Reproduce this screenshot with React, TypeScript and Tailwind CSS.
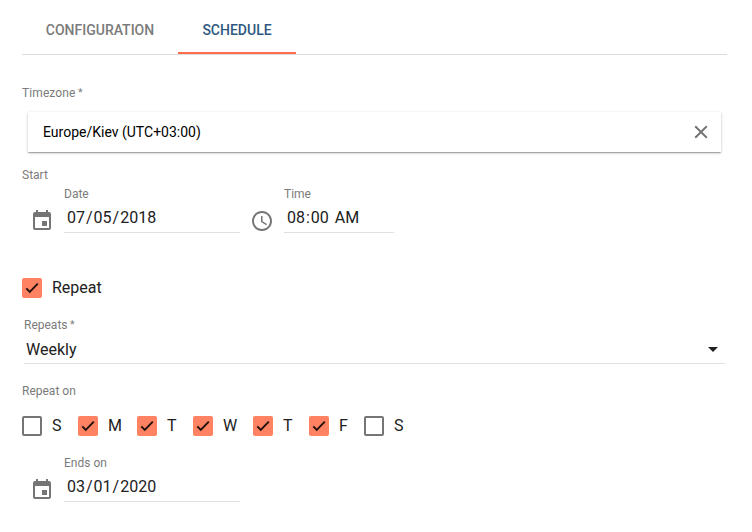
import type { ReactNode } from "react";

const days = [
  { label: "S", on: false, width: "w-[56px]" },
  { label: "M", on: true, width: "w-[59px]" },
  { label: "T", on: true, width: "w-[56px]" },
  { label: "W", on: true, width: "w-[60px]" },
  { label: "T", on: true, width: "w-[56px]" },
  { label: "F", on: true, width: "w-[55px]" },
  { label: "S", on: false, width: "w-[56px]" },
];

function Checkbox({ on }: { on: boolean }) {
  if (!on) {
    return <span className="size-5 shrink-0 rounded-[2px] border-2 border-[#757575]" />;
  }
  return (
    <span className="flex size-5 shrink-0 items-center justify-center rounded-[2px] bg-[#ff8262]">
      <svg viewBox="0 0 20 20" className="size-5" fill="none" stroke="#21110d" strokeWidth="1.9">
        <path d="M4.3 10.3l3.5 3.6L15.8 5.7" />
      </svg>
    </span>
  );
}

function CalendarIcon() {
  return (
    <svg viewBox="0 0 24 24" className="size-6 shrink-0" fill="#757575">
      <path d="M17 12h-5v5h5v-5zM16 1v2H8V1H6v2H5c-1.11 0-1.99.9-1.99 2L3 19c0 1.1.89 2 2 2h14c1.1 0 2-.9 2-2V5c0-1.1-.9-2-2-2h-1V1h-2zm3 18H5V8h14v11z" />
    </svg>
  );
}

function ClockIcon() {
  return (
    <svg viewBox="0 0 24 24" className="size-6 shrink-0" fill="#757575">
      <path d="M11.99 2C6.47 2 2 6.48 2 12s4.47 10 9.99 10C17.52 22 22 17.52 22 12S17.52 2 11.99 2zM12 20c-4.42 0-8-3.58-8-8s3.58-8 8-8 8 3.58 8 8-3.58 8-8 8z" />
      <path d="M12.5 7H11v6l5.25 3.15.75-1.23-4.5-2.67z" />
    </svg>
  );
}

function Label({ children, required }: { children: ReactNode; required?: boolean }) {
  return (
    <div className="flex h-4 text-xs leading-4 text-[#7b7b7b]">
      <span>{children}</span>
      {required && <span className="ml-[2.5px] text-[10.5px] leading-[15px]">*</span>}
    </div>
  );
}

type FieldProps = { icon: ReactNode; label: string; segments: string[]; width: string };

// Odd entries of segments are the separators between the editable parts.
function Field({ icon, label, segments, width }: FieldProps) {
  return (
    <div className="flex">
      <div className="mt-[23px] mr-2.5">{icon}</div>
      <div className={`${width} h-[47px] border-b border-[#e0e0e0]`}>
        <Label>{label}</Label>
        <div className="mt-[4px] flex h-6 pl-[2px] text-base leading-6 whitespace-pre text-[#212121]">
          {segments.map((part, i) => (
            <span key={i} className={i % 2 === 0 ? "px-px" : ""}>
              {part}
            </span>
          ))}
        </div>
      </div>
    </div>
  );
}

export default function App() {
  return (
    <div className="h-[532px] w-[752px] overflow-hidden bg-white pr-[25px] pl-[22px] font-['Roboto',sans-serif] text-[#212121]">
      <nav className="flex h-[55px] border-b border-[#dcdcdc] text-sm font-medium">
        <div className="flex h-[54px] w-[156px] items-center justify-center pt-[6px] text-[#7b7b7b]">CONFIGURATION</div>
        <div className="flex h-[54px] w-[118px] items-center justify-center border-b-2 border-[#ff6e4a] pt-[8px] text-[#2f5880]">
          SCHEDULE
        </div>
      </nav>

      <div className="mt-[30px] tracking-[0.1px]">
        <Label required>Timezone</Label>
      </div>
      <div className="mx-[6px] mt-[11px] flex h-10 items-center justify-between pr-[14px] pl-[15px] text-sm text-black shadow-[0_1px_3px_0_rgba(0,0,0,0.2),0_1px_1px_0_rgba(0,0,0,0.14),0_2px_1px_-1px_rgba(0,0,0,0.12)]">
        <span>Europe/Kiev (UTC+03:00)</span>
        <svg viewBox="0 0 12 12" className="size-3 overflow-visible" fill="none" stroke="#757575" strokeWidth="2">
          <path d="M.2.2l11.6 11.6M11.8.2L.2 11.8" />
        </svg>
      </div>

      <div className="mt-[15px]">
        <Label>Start</Label>
      </div>
      <div className="mt-[3px] flex gap-2.5 pl-2">
        <Field icon={<CalendarIcon />} label="Date" segments={["07", "/", "05", "/", "2018"]} width="w-44" />
        <Field icon={<ClockIcon />} label="Time" segments={["08", ":", "00", " ", "AM"]} width="w-[110px]" />
      </div>

      <div className="mt-[45px] flex h-5 items-center gap-2.5 text-base leading-5">
        <Checkbox on />
        <span>Repeat</span>
      </div>

      <div className="mx-[2px] mt-[19px] h-[47px] border-b border-[#e0e0e0]">
        <Label required>Repeats</Label>
        <div className="mt-[5px] flex h-6 items-center justify-between pr-[7px] pl-[2px] text-base">
          <span>Weekly</span>
          <svg viewBox="0 0 10 5" className="mb-[2px] h-[5px] w-2.5" fill="#212121">
            <path d="M0 0h10L5 5z" />
          </svg>
        </div>
      </div>

      <div className="mt-[19px]">
        <Label>Repeat on</Label>
      </div>
      <div className="mt-[17px] flex h-5">
        {days.map((day, i) => (
          <div key={i} className={`${day.width} flex items-center gap-2.5 text-base leading-5`}>
            <Checkbox on={day.on} />
            <span>{day.label}</span>
          </div>
        ))}
      </div>

      <div className="mt-[19px] flex pl-2">
        <Field icon={<CalendarIcon />} label="Ends on" segments={["03", "/", "01", "/", "2020"]} width="w-44" />
      </div>
    </div>
  );
}
